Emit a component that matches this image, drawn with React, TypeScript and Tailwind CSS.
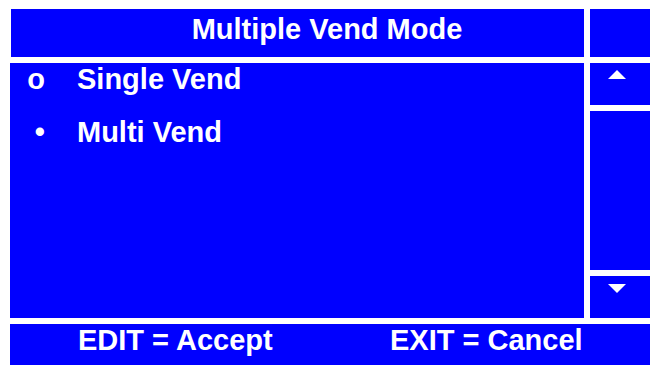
const font = { fontFamily: '"Liberation Sans", Arial, sans-serif' };

function Arrow({ up }: { up: boolean }) {
  return (
    <svg width="18" height="9" viewBox="0 0 18 9" className="block">
      {up ? <polygon points="9,0 18,9 0,9" fill="white" /> : <polygon points="0,0 18,0 9,9" fill="white" />}
    </svg>
  );
}

export default function App() {
  const options = [
    { label: "Single Vend", mark: "o" },
    { label: "Multi Vend", mark: "•" },
  ];

  return (
    <div className="w-[650px] h-[365px] bg-white overflow-hidden flex flex-col gap-[6px] pt-[9px] text-white font-bold" style={font}>
      {/* title row */}
      <div className="flex gap-[6px] h-[48px]">
        <div className="ml-[11px] w-[573px] bg-[#0000ff] flex items-center justify-center pl-[59px] pb-[8px] text-[29px] leading-none">
          Multiple Vend Mode
        </div>
        <div className="flex-1 bg-[#0000ff]" />
      </div>

      {/* body */}
      <div className="flex gap-[6px] h-[255px]">
        <div className="ml-[10px] w-[574px] bg-[#0000ff] flex flex-col gap-[21px]">
          {options.map((o) => (
            <div key={o.label} className="flex items-center h-[32px] text-[29px] leading-none">
              <span className="w-[35px] text-right">{o.mark}</span>
              <span className="ml-[32px]">{o.label}</span>
            </div>
          ))}
        </div>
        <div className="flex-1 flex flex-col gap-[6px]">
          <div className="h-[42px] bg-[#0000ff] flex justify-center pt-[7px] pr-[6px]">
            <Arrow up />
          </div>
          <div className="flex-1 bg-[#0000ff]" />
          <div className="h-[42px] bg-[#0000ff] flex justify-center pt-[8px] pr-[6px]">
            <Arrow up={false} />
          </div>
        </div>
      </div>

      {/* footer */}
      <div className="ml-[10px] h-[41px] bg-[#0000ff] flex items-center pl-[68px] pb-[8px] text-[29px] leading-none">
        <span className="w-[312px]">EDIT = Accept</span>
        <span>EXIT = Cancel</span>
      </div>
    </div>
  );
}
